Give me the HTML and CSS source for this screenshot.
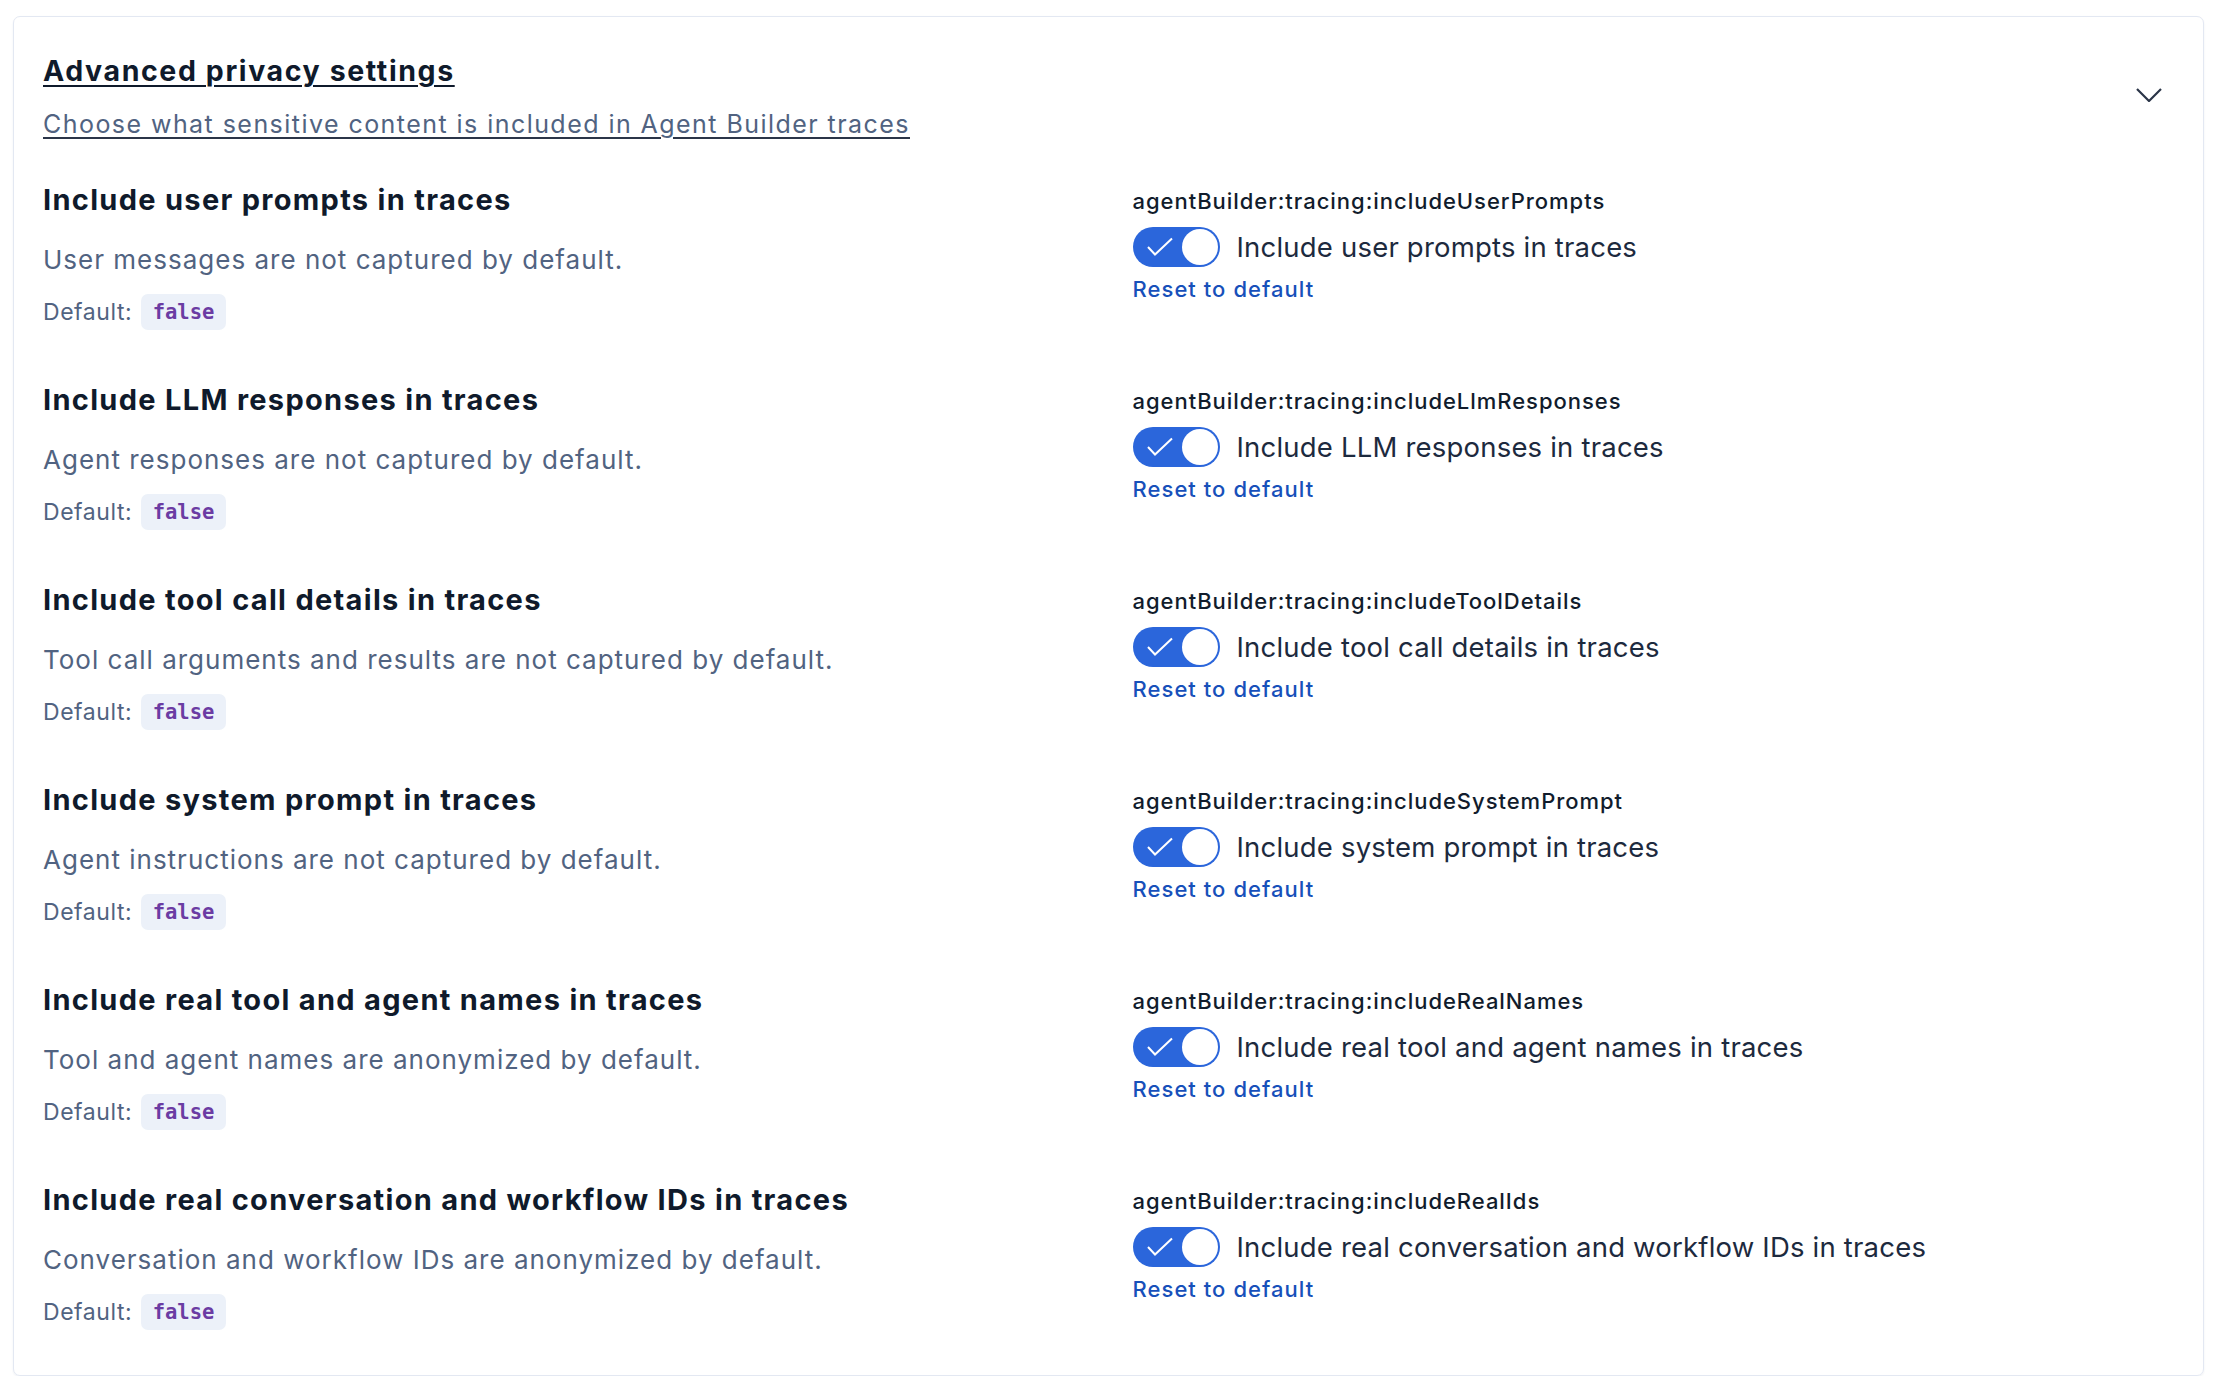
FILE: index.html
```html
<!DOCTYPE html>
<html lang="en">
<head>
<meta charset="utf-8">
<title>Advanced privacy settings</title>
<link rel="stylesheet" href="styles.css">
</head>
<body>
<section class="panel">
  <header class="panel-header">
    <div class="panel-heading">
      <h2 class="panel-title">Advanced privacy settings</h2>
      <p class="panel-subtitle">Choose what sensitive content is included in Agent Builder traces</p>
    </div>
    <button class="collapse-btn" type="button" aria-label="Collapse">
      <svg width="26" height="14" viewBox="0 0 26 14"><path d="M1 1 L13 13 L25 1" fill="none" stroke="#2b3548" stroke-width="2.2"/></svg>
    </button>
  </header>

  <div class="settings">
    <div class="setting">
      <div class="setting-info">
        <h3 class="setting-title">Include user prompts in traces</h3>
        <p class="setting-desc">User messages are not captured by default.</p>
        <div class="setting-default">Default: <code class="badge">false</code></div>
      </div>
      <div class="setting-control">
        <div class="setting-key">agentBuilder:tracing:includeUserPrompts</div>
        <label class="switch-row">
          <span class="switch"><svg class="switch-check" width="28" height="20" viewBox="0 0 28 20"><path d="M2 10 L9 17.5 L26 1.5" fill="none" stroke="#fff" stroke-width="2"/></svg><span class="switch-knob"></span></span>
          <span class="switch-label">Include user prompts in traces</span>
        </label>
        <a class="reset-link" href="#">Reset to default</a>
      </div>
    </div>

    <div class="setting">
      <div class="setting-info">
        <h3 class="setting-title">Include LLM responses in traces</h3>
        <p class="setting-desc">Agent responses are not captured by default.</p>
        <div class="setting-default">Default: <code class="badge">false</code></div>
      </div>
      <div class="setting-control">
        <div class="setting-key">agentBuilder:tracing:includeLlmResponses</div>
        <label class="switch-row">
          <span class="switch"><svg class="switch-check" width="28" height="20" viewBox="0 0 28 20"><path d="M2 10 L9 17.5 L26 1.5" fill="none" stroke="#fff" stroke-width="2"/></svg><span class="switch-knob"></span></span>
          <span class="switch-label">Include LLM responses in traces</span>
        </label>
        <a class="reset-link" href="#">Reset to default</a>
      </div>
    </div>

    <div class="setting">
      <div class="setting-info">
        <h3 class="setting-title">Include tool call details in traces</h3>
        <p class="setting-desc">Tool call arguments and results are not captured by default.</p>
        <div class="setting-default">Default: <code class="badge">false</code></div>
      </div>
      <div class="setting-control">
        <div class="setting-key">agentBuilder:tracing:includeToolDetails</div>
        <label class="switch-row">
          <span class="switch"><svg class="switch-check" width="28" height="20" viewBox="0 0 28 20"><path d="M2 10 L9 17.5 L26 1.5" fill="none" stroke="#fff" stroke-width="2"/></svg><span class="switch-knob"></span></span>
          <span class="switch-label">Include tool call details in traces</span>
        </label>
        <a class="reset-link" href="#">Reset to default</a>
      </div>
    </div>

    <div class="setting">
      <div class="setting-info">
        <h3 class="setting-title">Include system prompt in traces</h3>
        <p class="setting-desc">Agent instructions are not captured by default.</p>
        <div class="setting-default">Default: <code class="badge">false</code></div>
      </div>
      <div class="setting-control">
        <div class="setting-key">agentBuilder:tracing:includeSystemPrompt</div>
        <label class="switch-row">
          <span class="switch"><svg class="switch-check" width="28" height="20" viewBox="0 0 28 20"><path d="M2 10 L9 17.5 L26 1.5" fill="none" stroke="#fff" stroke-width="2"/></svg><span class="switch-knob"></span></span>
          <span class="switch-label">Include system prompt in traces</span>
        </label>
        <a class="reset-link" href="#">Reset to default</a>
      </div>
    </div>

    <div class="setting">
      <div class="setting-info">
        <h3 class="setting-title">Include real tool and agent names in traces</h3>
        <p class="setting-desc">Tool and agent names are anonymized by default.</p>
        <div class="setting-default">Default: <code class="badge">false</code></div>
      </div>
      <div class="setting-control">
        <div class="setting-key">agentBuilder:tracing:includeRealNames</div>
        <label class="switch-row">
          <span class="switch"><svg class="switch-check" width="28" height="20" viewBox="0 0 28 20"><path d="M2 10 L9 17.5 L26 1.5" fill="none" stroke="#fff" stroke-width="2"/></svg><span class="switch-knob"></span></span>
          <span class="switch-label">Include real tool and agent names in traces</span>
        </label>
        <a class="reset-link" href="#">Reset to default</a>
      </div>
    </div>

    <div class="setting">
      <div class="setting-info">
        <h3 class="setting-title">Include real conversation and workflow IDs in traces</h3>
        <p class="setting-desc">Conversation and workflow IDs are anonymized by default.</p>
        <div class="setting-default">Default: <code class="badge">false</code></div>
      </div>
      <div class="setting-control">
        <div class="setting-key">agentBuilder:tracing:includeRealIds</div>
        <label class="switch-row">
          <span class="switch"><svg class="switch-check" width="28" height="20" viewBox="0 0 28 20"><path d="M2 10 L9 17.5 L26 1.5" fill="none" stroke="#fff" stroke-width="2"/></svg><span class="switch-knob"></span></span>
          <span class="switch-label">Include real conversation and workflow IDs in traces</span>
        </label>
        <a class="reset-link" href="#">Reset to default</a>
      </div>
    </div>
  </div>
</section>
</body>
</html>
```
FILE: styles.css
```css
* {
  box-sizing: border-box;
}

html, body {
  margin: 0;
  padding: 0;
  background: #ffffff;
}

body {
  font-family: Inter, "Noto Sans", sans-serif;
  color: #111c2c;
}

/* Outer panel */
.panel {
  margin: 16px 18px 0 13px;
  border: 1px solid #e3e8f2;
  border-radius: 7px;
  box-shadow: 0 1px 2px rgba(40, 60, 100, 0.08);
  padding: 37px 29px 45px 29px;
}

.panel-header {
  display: flex;
  align-items: center;
  justify-content: space-between;
}

.panel-title {
  margin: 0;
  font-size: 28.5px;
  line-height: 34px;
  font-weight: 700;
  letter-spacing: 1.6px;
  color: #0f1a2b;
  text-decoration: underline;
  text-decoration-thickness: 2px;
  text-underline-offset: 4px;
}

.panel-subtitle {
  margin: 20px 0 0 0;
  font-size: 25px;
  line-height: 32px;
  font-weight: 400;
  letter-spacing: 1.45px;
  color: #516381;
  text-decoration: underline;
  text-decoration-color: #2b3548;
  text-decoration-thickness: 2px;
  text-underline-offset: 4px;
}

.collapse-btn {
  width: 40px;
  height: 40px;
  margin-right: 5px;
  margin-bottom: 4px;
  border: 0;
  padding: 0;
  background: transparent;
  display: flex;
  align-items: center;
  justify-content: center;
}

/* Settings list */
.settings {
  margin-top: 43px;
  display: flex;
  flex-direction: column;
  gap: 53px;
}

.setting {
  display: grid;
  grid-template-columns: 1fr 1fr;
  column-gap: 48px;
}

.setting-title {
  margin: 0;
  font-size: 29px;
  line-height: 34px;
  font-weight: 700;
  letter-spacing: 1.3px;
  color: #0f1a2b;
}

.setting-desc {
  margin: 25px 0 0 0;
  font-size: 26px;
  line-height: 36px;
  letter-spacing: 1px;
  color: #516381;
}

.setting-default {
  margin-top: 16px;
  display: flex;
  align-items: center;
  gap: 9px;
  font-size: 23px;
  line-height: 28px;
  letter-spacing: 0.55px;
  color: #516381;
}

.badge {
  display: inline-flex;
  align-items: center;
  height: 36px;
  padding: 0 11.5px;
  border-radius: 7px;
  background: #ecf1f9;
  color: #6b3ca3;
  font-family: "DejaVu Sans Mono", "Liberation Mono", monospace;
  font-weight: 700;
  font-size: 20.5px;
  letter-spacing: 0;
}

/* Right-hand control column */
.setting-control {
  padding-top: 4px;
  display: flex;
  flex-direction: column;
  align-items: flex-start;
}

.setting-key {
  font-size: 22px;
  line-height: 28px;
  font-weight: 500;
  letter-spacing: 0.97px;
  color: #111c2c;
}

.switch-row {
  margin-top: 12px;
  display: flex;
  align-items: center;
  gap: 17px;
}

.switch {
  position: relative;
  width: 87px;
  height: 40px;
  border-radius: 20px;
  background: #2b66db;
  flex: none;
}

.switch-check {
  position: absolute;
  left: 13px;
  top: 10px;
}

.switch-knob {
  position: absolute;
  right: 2px;
  top: 2px;
  width: 36px;
  height: 36px;
  border-radius: 50%;
  background: #ffffff;
}

.switch-label {
  font-size: 27.5px;
  line-height: 34px;
  letter-spacing: 0.2px;
  color: #1d2a3e;
}

.reset-link {
  margin-top: 8px;
  font-size: 22px;
  line-height: 28px;
  font-weight: 500;
  letter-spacing: 1.05px;
  color: #1750ba;
  text-decoration: none;
}
```
